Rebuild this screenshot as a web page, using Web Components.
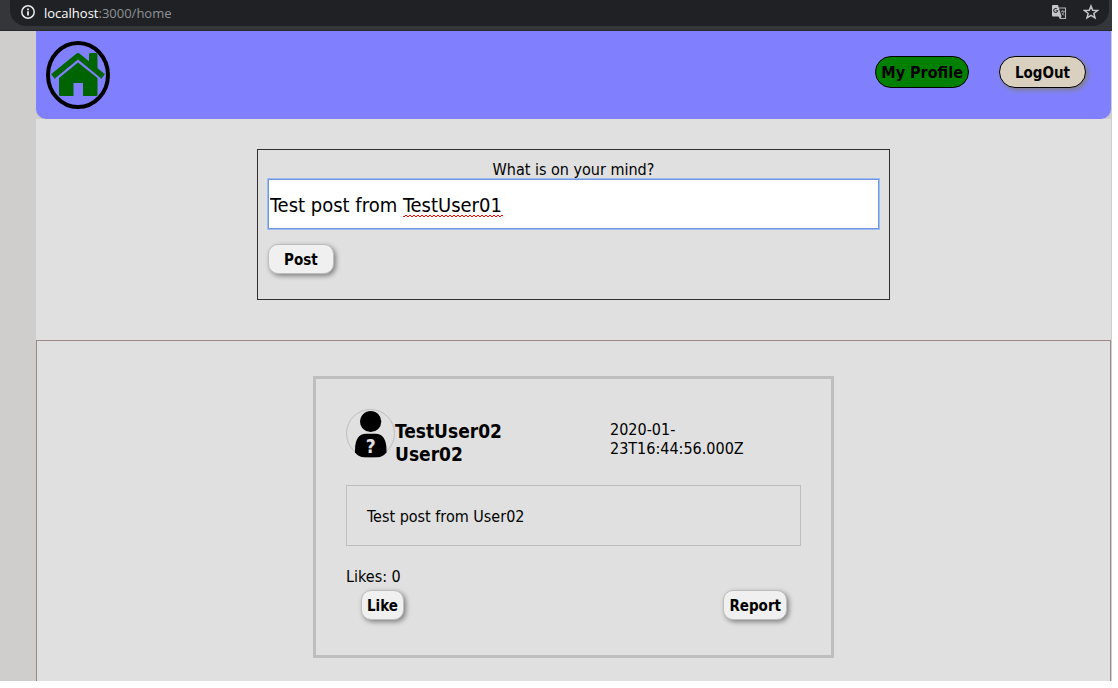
<!DOCTYPE html>
<html lang="en">
<head>
<meta charset="utf-8">
<title>Home</title>
<style>
  * { box-sizing: border-box; }
  body {
    margin: 0;
    height: 100vh;
    padding: 0 6px 7px 0;
    background: #fff;
    color: #000;
    font: 16px/19px "DejaVu Sans Condensed", "DejaVu Sans", sans-serif;
  }
</style>
</head>
<body>
<app-shell>
  <address-bar slot="bar" host="localhost" path=":3000/home"></address-bar>
  <site-header slot="header"></site-header>
  <post-composer value="Test post from TestUser01"></post-composer>
  <post-feed>
    <post-card author="TestUser02 User02" likes="0">
      <time slot="date" datetime="2020-01-23T16:44:56.000Z">2020-01-<wbr>23T16:44:56.000Z</time>
      Test post from User02
    </post-card>
  </post-feed>
</app-shell>
<script>
const define = (name, template, setup) => {
  customElements.define(name, class extends HTMLElement {
    connectedCallback() {
      if (this.shadowRoot) return;
      const root = this.attachShadow({ mode: 'open' });
      root.innerHTML = '<style>*{box-sizing:border-box}</style>' + template;
      if (setup) setup(this, root);
    }
  });
};

define('app-shell', `
  <style>
    :host { display: flex; flex-direction: column; height: 100%; overflow: hidden; background: #cfcecd; }
    .page { flex: 1; min-height: 0; display: flex; flex-direction: column; padding: 0 1px 0 36px; }
    main { flex: 1; min-height: 0; display: flex; flex-direction: column; padding-top: 30px; gap: 40px; background: #e0e0e0; }
  </style>
  <slot name="bar"></slot>
  <div class="page">
    <slot name="header"></slot>
    <main><slot></slot></main>
  </div>`);

define('address-bar', `
  <style>
    :host { display: block; flex: none; height: 31px; padding: 0 3px 0 10px; background: #35363a; border-bottom: 1px solid #28292c; }
    .pill { display: flex; align-items: center; height: 26px; padding: 0 10px; border-radius: 0 0 16px 16px; background: #202124; }
    .url { flex: 1; height: 26px; padding-left: 8px; color: #8f9296; font: 13px/26px "Open Sans", "Noto Sans", sans-serif; }
    .url b { color: #fff; font-weight: 400; }
    .tools { display: flex; gap: 16px; margin-bottom: 2px; }
    button { width: 16px; height: 16px; padding: 0; border: 0; background: none; }
    svg { display: block; width: 16px; height: 16px; }
    .info { margin-bottom: 2px; }
  </style>
  <div class="pill">
    <button class="info" aria-label="Site information">
      <svg viewBox="0 0 16 16"><circle cx="8" cy="8" r="6.2" fill="none" stroke="#e8eaed" stroke-width="1.5"/><path d="M7.1 7.2h1.8v4.2H7.1zM7.1 4.6h1.8v1.7H7.1z" fill="#e8eaed"/></svg>
    </button>
    <span class="url"><b></b><span class="path"></span></span>
    <span class="tools">
      <button aria-label="Translate">
        <svg viewBox="0 0 16 16"><path d="M8 4h6.500v10.500H9" fill="none" stroke="#b4b6b9" stroke-width="1.100"/><path d="M2 1h5l3.500 11.500L9 15l-1.500-2.500H2a1 1 0 0 1-1-1V2a1 1 0 0 1 1-1z" fill="#c4c6c9"/><path d="M4.800 6.700h1.900A2 2 0 1 1 6 4.900" fill="none" stroke="#303134" stroke-width="1.100"/><path d="M9.800 7.300h4M11.700 6.200v1.100M13 7.300c-.4 2-1.200 3-2.200 3.900M10.800 8.600c.5 1.200 1.300 2 2.500 2.900" fill="none" stroke="#a4a6a9" stroke-width=".9"/></svg>
      </button>
      <button aria-label="Bookmark this page">
        <svg viewBox="0 0 16 16"><path d="M8 2l1.700 4.200 4.700.3-3.600 3 1.200 4.400-4-2.500-4 2.500 1.200-4.400-3.600-3 4.700-.3z" fill="none" stroke="#c4c6c9" stroke-width="1.500"/></svg>
      </button>
    </span>
  </div>`, (el, root) => {
  root.querySelector('b').textContent = el.getAttribute('host');
  root.querySelector('.path').textContent = el.getAttribute('path');
});

define('site-header', `
  <style>
    :host { display: flex; flex: none; justify-content: space-between; align-items: flex-start; padding: 10px 25px 10px 10px; background: #8080ff; border-radius: 0 0 10px 10px; }
    svg { display: block; width: 64px; height: 68px; }
    nav { display: flex; gap: 30px; padding-top: 15px; }
    .profile { height: 32px; padding: 1px 5px 0; border: 1px solid #000; border-radius: 16px; background: #008000; color: #000; font-weight: 700; line-height: 30px; text-decoration: none; }
  </style>
  <a href="#home" aria-label="Home">
    <svg viewBox="0 0 64 68">
      <ellipse cx="32" cy="34" rx="30" ry="32" fill="none" stroke="#000" stroke-width="4"/>
      <path d="M43 13.500a1.500 1.500 0 0 1 1.500-1.500h5.500a1.500 1.500 0 0 1 1.500 1.500V29L43 22z" fill="#006400"/>
      <path d="M8 34.500L32 14.800l24 19.700" fill="none" stroke="#006400" stroke-width="5.500" stroke-linejoin="round"/>
      <path d="M6 33l3 4M58 33l-3 4" stroke="#006400" stroke-width="1.500" stroke-linecap="round"/>
      <path d="M32 21.500L51.500 37v16.500a1.500 1.500 0 0 1-1.500 1.500H37V42h-9.500v13H14.500a1.500 1.500 0 0 1-1.500-1.500V37z" fill="#006400"/>
    </svg>
  </a>
  <nav>
    <a class="profile" href="#profile">My Profile</a>
    <soft-button variant="logout">LogOut</soft-button>
  </nav>`);

define('soft-button', `
  <style>
    :host { display: block; }
    button { display: block; height: 30px; padding: 2px 15px 0; border: 1px solid #bebebe; border-radius: 10px; background: #f0f0f0; color: #000; font: inherit; font-size: 15px; font-weight: 700; line-height: 26px; box-shadow: 2px 2px 5px #808080; }
    :host([compact]) button { padding: 2px 5px 0; }
    :host([variant="logout"]) button { height: 32px; line-height: 28px; border-color: #000; border-radius: 16px; background: #dad0c0; }
  </style>
  <button type="button"><slot></slot></button>`);

define('post-composer', `
  <style>
    :host { display: block; flex: none; align-self: center; width: 100%; max-width: 633px; padding: 10px 10px 25px; border: 1px solid #303030; }
    label { display: block; text-align: center; }
    .field { position: relative; margin-bottom: 15px; }
    input { display: block; width: 100%; height: 50px; margin: 0; padding: 2px 1px 0; border: 1px solid #6f99dc; outline: 1px solid #9dbdf0; border-radius: 0; background: #fff; color: #000; font: inherit; font-size: 20px; }
    .spelling { position: absolute; left: 135px; top: 35px; width: 100px; height: 4px; }
    .row { display: flex; }
  </style>
  <label for="post">What is on your mind?</label>
  <div class="field">
    <input id="post" type="text" spellcheck="false">
    <svg class="spelling" aria-hidden="true"><defs><pattern id="w" width="4" height="4" patternUnits="userSpaceOnUse"><path d="M-1 .5L1 2.500 3 .500 5 2.500" transform="translate(0 .5)" fill="none" stroke="#f00"/></pattern></defs><rect width="100" height="4" fill="url(#w)"/></svg>
  </div>
  <div class="row"><soft-button>Post</soft-button></div>`, (el, root) => {
  root.querySelector('input').value = el.getAttribute('value');
});

define('post-feed', `
  <style>
    :host { display: flex; flex: 1; min-height: 0; flex-direction: column; align-items: center; padding-top: 35px; border: 1px solid #9c8987; border-bottom: 0; }
  </style>
  <slot></slot>`);

define('post-card', `
  <style>
    :host { display: block; width: 100%; max-width: 521px; padding: 30px 30px 35px; border: 3px solid #bebebe; }
    header { display: grid; grid-template-columns: 49px 1fr 191px; padding-bottom: 19px; }
    .avatar { width: 49px; height: 49px; border: 1px solid #bebebe; border-radius: 50%; }
    svg { display: block; width: 49px; height: 49px; margin: -1px; overflow: visible; }
    svg text { font-size: 19px; font-weight: 700; }
    h3 { width: min-content; margin: 11px 0 0; font-size: 19px; line-height: 23px; }
    .date { padding-top: 11px; }
    p { margin: 0 0 20px; padding: 21px 20px 19px; border: 1px solid #bebebe; }
    .likes { padding-top: 1px; }
    .actions { display: flex; justify-content: space-between; padding: 4px 14px 0 15px; }
  </style>
  <header>
    <div class="avatar"><svg viewBox="0 0 49 49" aria-hidden="true">
      <circle cx="24.700" cy="12.500" r="10.600"/>
      <path d="M20 24.700h9.500c7 0 11 5.500 11 16.300v2.500q-4 4.800-9 4.800H18q-5 0-9-4.800V41c0-10.800 4-16.300 11-16.300z"/>
      <text x="24.700" y="44" text-anchor="middle" fill="#e0e0e0">?</text>
    </svg></div>
    <h3></h3>
    <div class="date"><slot name="date"></slot></div>
  </header>
  <p><slot></slot></p>
  <div class="likes"></div>
  <div class="actions">
    <soft-button compact>Like</soft-button>
    <soft-button compact>Report</soft-button>
  </div>`, (el, root) => {
  root.querySelector('h3').textContent = el.getAttribute('author');
  root.querySelector('.likes').textContent = 'Likes: ' + el.getAttribute('likes');
});
</script>
</body>
</html>
